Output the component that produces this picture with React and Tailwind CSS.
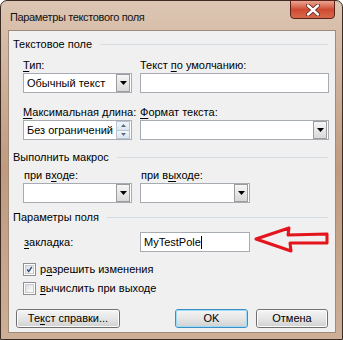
import React from "react";

const U = ({ children }) => <span className="underline underline-offset-[2px]">{children}</span>;

const Section = ({ children, lineGap = "ml-[8px]" }) => (
  <div className="flex items-center h-[14px] pl-[4px] pr-[7px]">
    <span className="whitespace-nowrap">{children}</span>
    <div className={`${lineGap} flex-1 h-px bg-[#d5dde3]`} />
  </div>
);

const Tri = () => (
  <svg width="7" height="4" viewBox="0 0 7 4">
    <path d="M0 0H7L3.5 4Z" fill="#000" />
  </svg>
);

const DropBtn = () => (
  <div className="w-[14px] h-[18px] border border-[#9c9c9c] bg-gradient-to-b from-[#f6f6f6] to-[#d9d9d9] flex items-center justify-center">
    <Tri />
  </div>
);

const Select = ({ w, text }) => (
  <div className={`${w} h-[20px] bg-white border border-[#a7acb3] flex items-center justify-between pl-[3px] pr-[1px]`}>
    <span className="whitespace-nowrap">{text}</span>
    <DropBtn />
  </div>
);

const Input = ({ w, children }) => (
  <div className={`${w} h-[20px] bg-white border border-[#a7acb3] flex items-center pl-[3px]`}>{children}</div>
);

const Spin = () => (
  <div className="w-[109px] h-[20px] bg-white border border-[#a7acb3] flex items-center justify-between pl-[3px] pr-[1px]">
    <span className="whitespace-nowrap">Без ограничений</span>
    <div className="w-[14px] h-[18px] flex flex-col">
      <div className="flex-1 border border-[#b8c4d2] bg-gradient-to-b from-[#f2f6fa] to-[#dbe4ee] flex items-center justify-center">
        <svg width="5" height="3" viewBox="0 0 5 3"><path d="M0 3H5L2.5 0Z" fill="#5c6c80" /></svg>
      </div>
      <div className="flex-1 border border-t-0 border-[#b8c4d2] bg-gradient-to-b from-[#f2f6fa] to-[#dbe4ee] flex items-center justify-center">
        <svg width="5" height="3" viewBox="0 0 5 3"><path d="M0 0H5L2.5 3Z" fill="#5c6c80" /></svg>
      </div>
    </div>
  </div>
);

const Check = ({ checked }) => (
  <div className="w-[13px] h-[13px] border border-[#8e8f8f] bg-white p-[1px]">
    <div className="w-full h-full border border-[#c8cbd0] bg-gradient-to-br from-[#d9dde2] to-[#ffffff] flex items-center justify-center">
      {checked && (
        <svg width="9" height="9" viewBox="0 0 9 9">
          <path d="M1.5 4.5L3.5 7L7.5 1" stroke="#2f4d8a" strokeWidth="1.8" fill="none" />
        </svg>
      )}
    </div>
  </div>
);

const Button = ({ w, children, def }) => (
  <div
    className={`${w} h-[19px] rounded-[3px] border ${def ? "border-[#3c8ec4]" : "border-[#707070]"} flex`}
  >
    <div className={`flex-1 rounded-[2px] border ${def ? "border-[#9ddcf8]" : "border-[#fbfbfb]"} bg-gradient-to-b from-[#f3f3f3] via-[#e6e6e6] to-[#d3d3d3] flex items-center justify-center`}>
      {children}
    </div>
  </div>
);

export default function App() {
  return (
    <div
      className="w-[343px] h-[340px] rounded-t-[7px] border border-[#3b2b22] bg-gradient-to-b from-[#dcc6b3] via-[#bf9a7e] to-[#cdaf97] flex flex-col text-[11px] text-black"
      style={{ fontFamily: '"Liberation Sans", Arial, sans-serif' }}
    >
      {/* Title bar */}
      <div className="h-[29px] flex items-start justify-between pl-[9px] pr-[7px]">
        <span className="mt-[8px] text-[11px] tracking-[-0.35px] text-[#111]">Параметры текстового поля</span>
        <div className="w-[45px] h-[19px] -mt-px rounded-b-[4px] border border-[#5b2219] bg-gradient-to-b from-[#e8a593] via-[#cf4a31] to-[#d8684b] flex items-center justify-center">
          <svg width="14" height="12" viewBox="0 0 14 12">
            <path d="M2 1.5L12 10.5M12 1.5L2 10.5" stroke="#5b2219" strokeWidth="4" strokeLinecap="round" />
            <path d="M2 1.5L12 10.5M12 1.5L2 10.5" stroke="#ffffff" strokeWidth="2.4" strokeLinecap="round" />
          </svg>
        </div>
      </div>

      {/* Client */}
      <div className="ml-[7px] mr-[6px] mb-[6px] flex-1 border border-[#a08a7c] bg-[#f0f0f0] flex flex-col">
        <div className="mt-[6px]">
          <Section>Текстовое поле</Section>
        </div>

        <div className="mt-[7px] pl-[14px] grid grid-cols-[109px_189px] gap-x-[8px]">
          <div className="h-[14px] leading-[14px]"><U>Т</U>ип:</div>
          <div className="h-[14px] leading-[14px]">Текст <U>п</U>о умолчанию:</div>
          <div className="mt-[1px]"><Select w="w-[109px]" text="Обычный текст" /></div>
          <div className="mt-[1px]"><Input w="w-[189px]" /></div>

          <div className="mt-[12px] h-[14px] leading-[14px] whitespace-nowrap"><U>М</U>аксимальная длина:</div>
          <div className="mt-[12px] h-[14px] leading-[14px]"><U>Ф</U>ормат текста:</div>
          <div className="mt-[1px]"><Spin /></div>
          <div className="mt-[1px]"><Select w="w-[189px]" text="" /></div>
        </div>

        <div className="mt-[10px]">
          <Section>Выполнить макрос</Section>
        </div>

        <div className="mt-[4px] pl-[14px] grid grid-cols-[109px_110px] gap-x-[8px]">
          <div className="h-[14px] leading-[14px] pl-[1px]">при в<U>х</U>оде:</div>
          <div className="h-[14px] leading-[14px] pl-[1px]">при в<U>ы</U>ходе:</div>
          <div className="mt-[1px]"><Select w="w-[109px]" text="" /></div>
          <div className="mt-[1px]"><Select w="w-[110px]" text="" /></div>
        </div>

        <div className="mt-[7px]">
          <Section>Параметры поля</Section>
        </div>

        <div className="mt-[5px] pl-[14px] flex items-center">
          <div className="w-[117px] pl-[1px]"><U>з</U>акладка:</div>
          <Input w="w-[110px]">
            <span>MyTestPole</span>
            <span className="w-px h-[13px] bg-black" />
          </Input>
          <svg width="80" height="30" viewBox="0 0 80 30" className="-mt-[4px] ml-[2px]">
            <path
              d="M4 14 L37 3 L36 10 L75 9 L75 18 L38 18 L39 26 Z"
              fill="none"
              stroke="#e3141b"
              strokeWidth="3"
              strokeLinejoin="round"
            />
          </svg>
        </div>

        <div className="mt-[7px] pl-[14px] flex items-center gap-[4px] h-[15px]">
          <Check checked />
          <span>р<U>а</U>зрешить изменения</span>
        </div>
        <div className="mt-[4px] pl-[14px] flex items-center gap-[4px] h-[15px]">
          <Check />
          <span><U>в</U>ычислить при выходе</span>
        </div>

        <div className="mt-[13px] pl-[7px] pr-[7px] flex items-center">
          <Button w="w-[104px]">Те<U>к</U>ст справки...</Button>
          <div className="flex-1" />
          <Button w="w-[73px]" def>OK</Button>
          <div className="w-[8px]" />
          <Button w="w-[72px]">Отмена</Button>
        </div>
      </div>
    </div>
  );
}
